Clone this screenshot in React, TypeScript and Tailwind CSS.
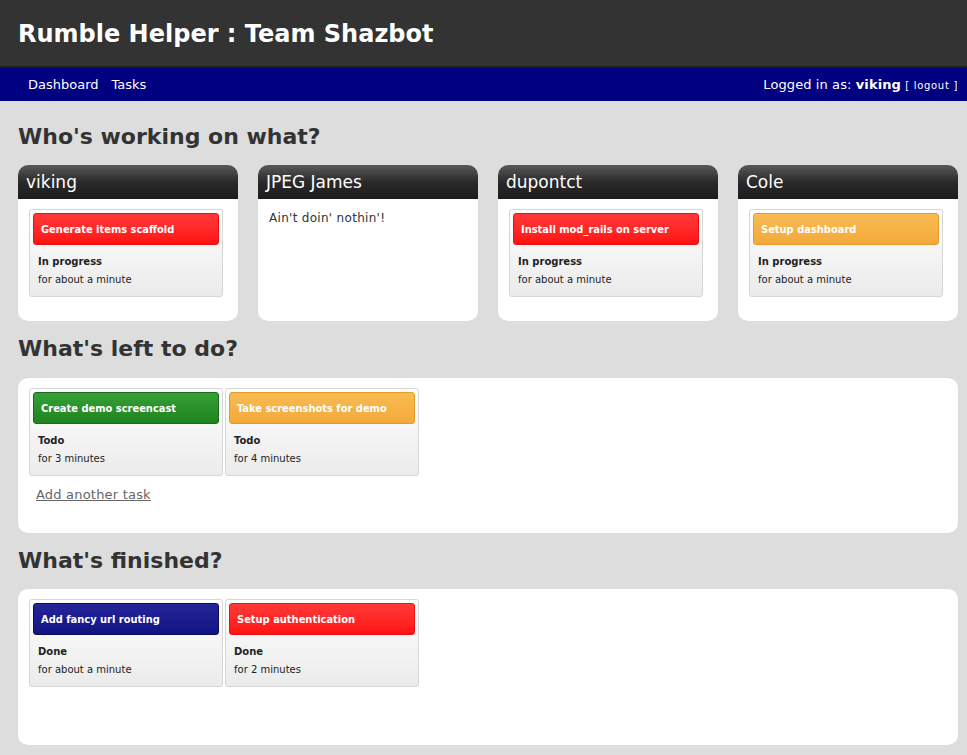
const font = { fontFamily: '"DejaVu Sans", Verdana, sans-serif' };

type Color = "red" | "green" | "orange" | "navy";

const BAR: Record<Color, string> = {
  red: "bg-gradient-to-b from-[#ff3838] to-[#ff1010] border-[#e81010]",
  green: "bg-gradient-to-b from-[#36a036] to-[#1f831f] border-[#176b17]",
  orange: "bg-gradient-to-b from-[#f8bb52] to-[#f3a93a] border-[#e59a2a]",
  navy: "bg-gradient-to-b from-[#25259a] to-[#121283] border-[#0b0b60]",
};

interface Task {
  title: string;
  color: Color;
  status: string;
  since: string;
}

function TaskCard({ task }: { task: Task }) {
  return (
    <div className="w-[194px] h-[88px] rounded-[3px] border border-[#d6d6d6] bg-gradient-to-b from-white to-[#ebebeb] p-[3px]">
      <div
        className={`h-[32px] rounded-[3px] border flex items-center pt-[2px] px-[7px] text-white text-[11px] font-bold ${BAR[task.color]}`}
        style={{ fontFamily: '"DejaVu Sans Condensed", "DejaVu Sans", sans-serif', fontStretch: "condensed" }}
      >
        {task.title}
      </div>
      <div className="px-[5px] pt-[8px] text-[10px] text-[#222] leading-[18px]">
        <div className="font-bold">{task.status}</div>
        <div>{task.since}</div>
      </div>
    </div>
  );
}

function UserCard({ name, task }: { name: string; task?: Task }) {
  return (
    <div className="w-[220px] h-[156px] rounded-[10px] bg-white overflow-hidden">
      <div className="h-[34px] bg-gradient-to-b from-[#5a5a5a] via-[#2a2a2a] to-[#1c1c1c] text-white text-[17px] px-[8px] pt-[1px] flex items-center">
        {name}
      </div>
      <div className="px-[11px] pt-[10px]">
        {task ? (
          <TaskCard task={task} />
        ) : (
          <p className="text-[12px] text-[#333] tracking-[0.3px]">Ain't doin' nothin'!</p>
        )}
      </div>
    </div>
  );
}

function Heading({ children }: { children: React.ReactNode }) {
  return <h2 className="text-[22px] font-bold text-[#333] leading-[26px]">{children}</h2>;
}

export default function App() {
  const left: Task[] = [
    { title: "Create demo screencast", color: "green", status: "Todo", since: "for 3 minutes" },
    { title: "Take screenshots for demo", color: "orange", status: "Todo", since: "for 4 minutes" },
  ];
  const done: Task[] = [
    { title: "Add fancy url routing", color: "navy", status: "Done", since: "for about a minute" },
    { title: "Setup authentication", color: "red", status: "Done", since: "for 2 minutes" },
  ];

  return (
    <div className="min-h-screen bg-[#dddddd]" style={font}>
      {/* header */}
      <div className="h-[66px] bg-[#333333] px-[18px] flex items-center">
        <h1 className="text-[24px] font-bold text-white pt-[1px]">Rumble Helper : Team Shazbot</h1>
      </div>
      <div className="h-[2px] bg-[#1f1f1f]" />
      <div className="h-[33px] bg-[#000080] text-white text-[13px] flex items-center justify-between pl-[28px] pr-[9px] w-[967px]">
        <div className="flex gap-[13px]">
          <span>Dashboard</span>
          <span>Tasks</span>
        </div>
        <div className="tracking-[0.1px]">
          Logged in as: <span className="font-bold">viking</span>{" "}
          <span className="text-[10px] tracking-[0.7px]">[ logout ]</span>
        </div>
      </div>

      <div className="w-[940px] ml-[18px] pt-[23px] pb-[10px]">
        <Heading>Who's working on what?</Heading>
        <div className="flex gap-[20px] mt-[15px]">
          <UserCard
            name="viking"
            task={{ title: "Generate items scaffold", color: "red", status: "In progress", since: "for about a minute" }}
          />
          <UserCard name="JPEG James" />
          <UserCard
            name="dupontct"
            task={{ title: "Install mod_rails on server", color: "red", status: "In progress", since: "for about a minute" }}
          />
          <UserCard
            name="Cole"
            task={{ title: "Setup dashboard", color: "orange", status: "In progress", since: "for about a minute" }}
          />
        </div>

        <div className="mt-[15px]">
          <Heading>What's left to do?</Heading>
        </div>
        <div className="mt-[16px] h-[155px] rounded-[10px] bg-white px-[11px] pt-[10px]">
          <div className="flex gap-[2px]">
            {left.map((t) => (
              <TaskCard key={t.title} task={t} />
            ))}
          </div>
          <a href="#" className="inline-block mt-[9px] ml-[7px] text-[13px] text-[#666] underline tracking-[0.2px]">
            Add another task
          </a>
        </div>

        <div className="mt-[15px]">
          <Heading>What's finished?</Heading>
        </div>
        <div className="mt-[15px] h-[156px] rounded-[10px] bg-white px-[11px] pt-[10px]">
          <div className="flex gap-[2px]">
            {done.map((t) => (
              <TaskCard key={t.title} task={t} />
            ))}
          </div>
        </div>
      </div>
    </div>
  );
}
